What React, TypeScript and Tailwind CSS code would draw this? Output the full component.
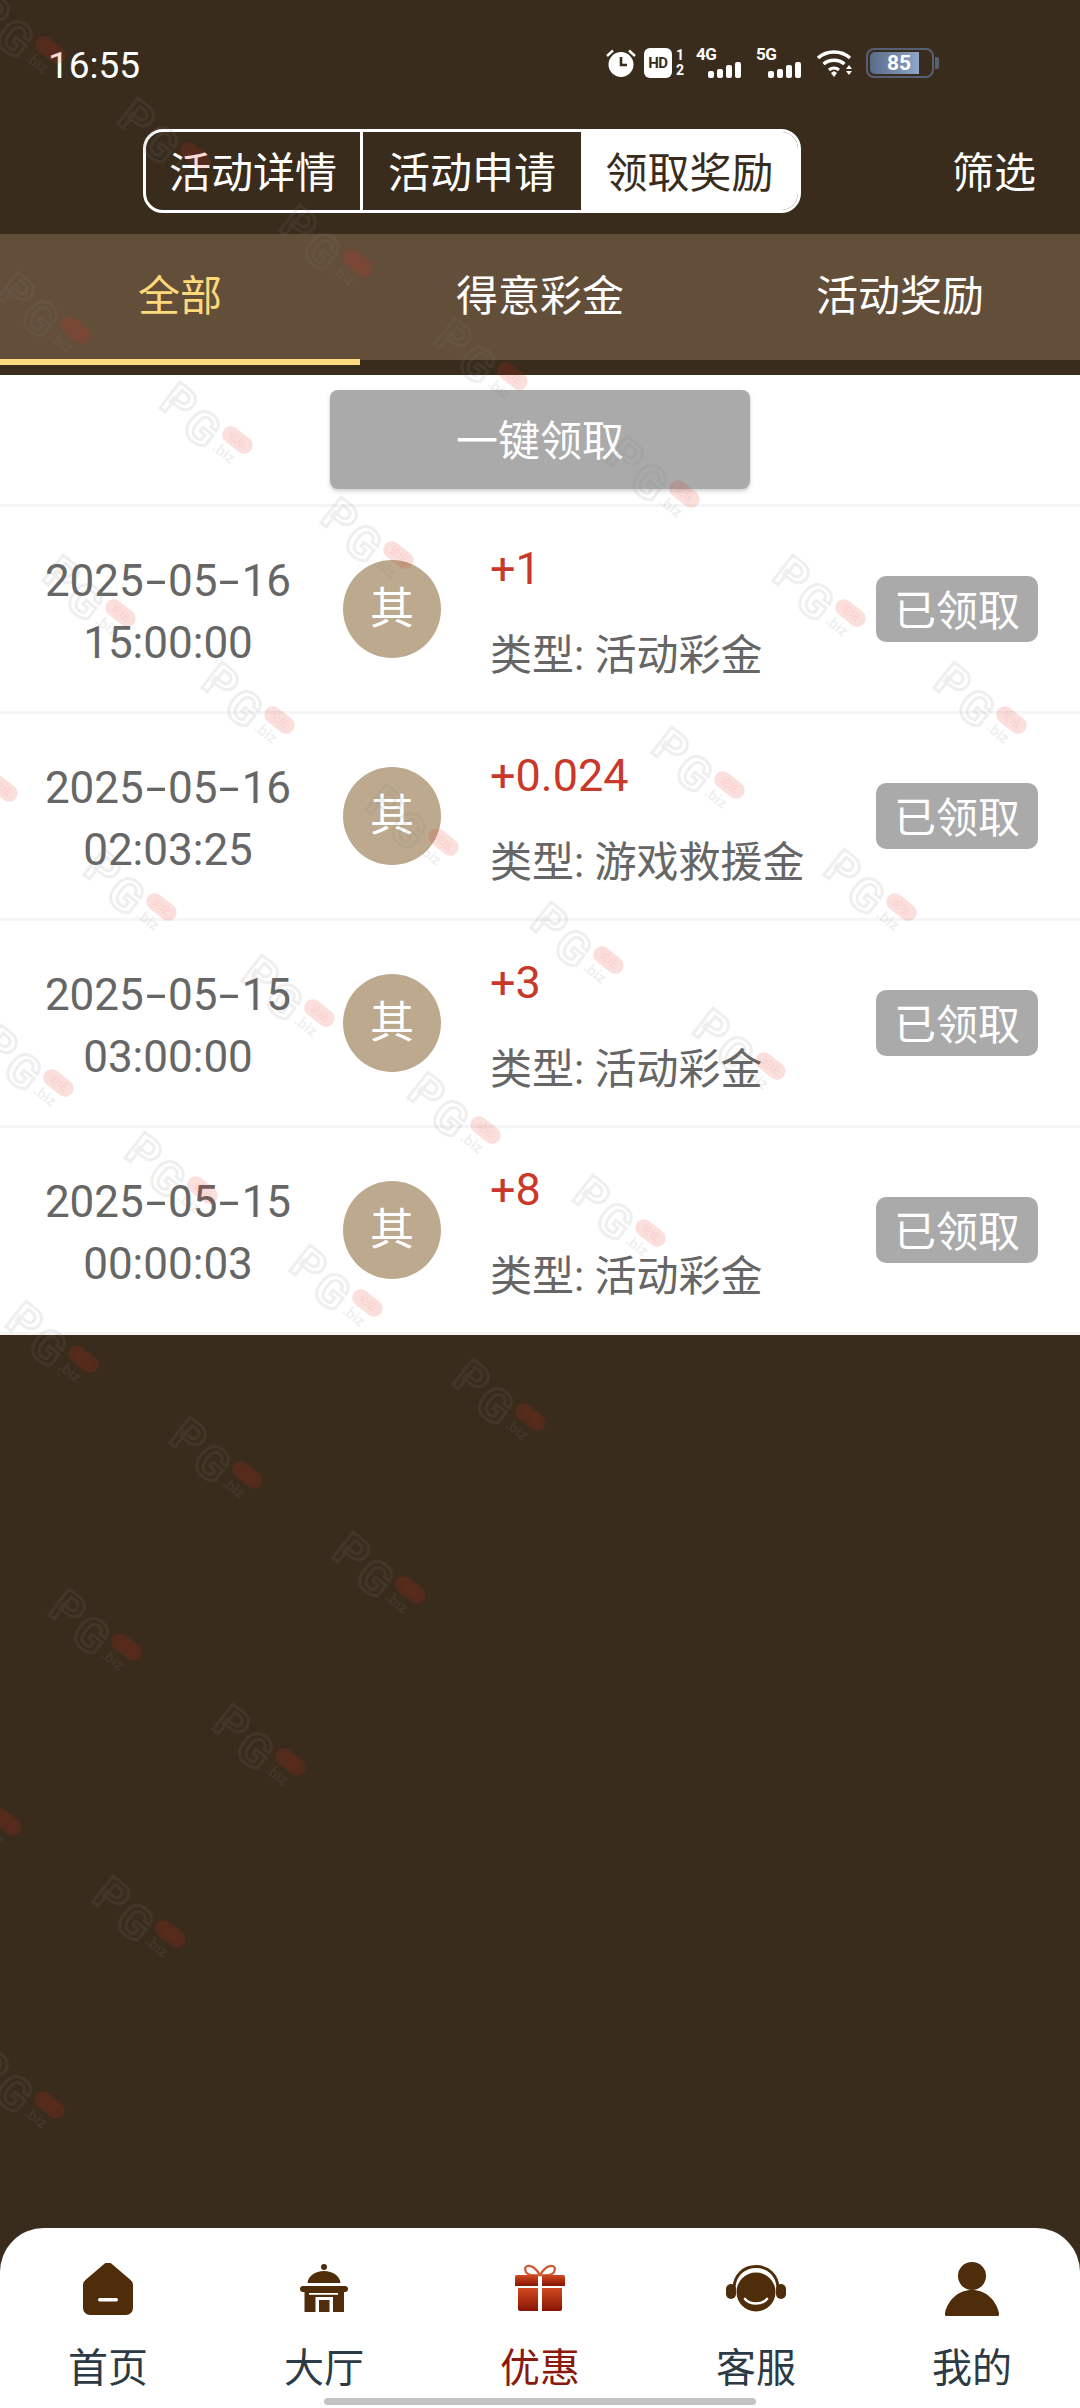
const RECORDS = [
  { date: '2025-05-16', time: '15:00:00', amount: '+1', type: '活动彩金' },
  { date: '2025-05-16', time: '02:03:25', amount: '+0.024', type: '游戏救援金' },
  { date: '2025-05-15', time: '03:00:00', amount: '+3', type: '活动彩金' },
  { date: '2025-05-15', time: '00:00:03', amount: '+8', type: '活动彩金' },
];

// centre points of the repeating site watermark
const MARKS = [
  [20, 37], [165, 143], [327, 250], [45, 317], [482, 363], [207, 427], [654, 481], [368, 542],
  [820, 600], [90, 600], [249, 707], [981, 707], [699, 772], [413, 829], [-28, 775], [131, 894],
  [871, 894], [578, 947], [289, 1000], [28, 1070], [740, 1053], [455, 1117], [172, 1177],
  [620, 1220], [337, 1290], [53, 1346], [500, 1404], [217, 1462], [380, 1577], [96, 1634],
  [260, 1749], [-24, 1809], [140, 1921], [19, 2092],
];

function Watermark({ x, y }: { x: number; y: number }) {
  return (
    <div className="absolute w-0 h-0 rotate-[38deg]" style={{ left: x, top: y }}>
      <span className="absolute left-[-52px] top-[-26px] text-[46px] leading-[48px] font-bold text-transparent [-webkit-text-stroke:3px_rgba(128,128,128,0.14)]">P</span>
      <span className="absolute left-[-19px] top-[-20px] text-[46px] leading-[48px] font-bold text-transparent [-webkit-text-stroke:3px_rgba(128,128,128,0.14)]">G</span>
      <span className="absolute left-[15px] top-[-17px] w-[34px] h-[17px] rounded-full bg-[rgba(225,40,30,0.15)] text-[10px] leading-[17px] text-center text-[rgba(225,40,30,0.12)]">论坛</span>
      <span className="absolute left-[17px] top-[2px] text-[15px] leading-[16px] font-bold text-[rgba(128,128,128,0.14)]">.biz</span>
    </div>
  );
}

function StatusIcons() {
  return (
    <div className="flex items-center text-white">
      {/* alarm */}
      <svg width="32" height="30" viewBox="0 0 32 30">
        <circle cx="16" cy="16.500" r="12.500" fill="#fff" />
        <path d="M16 9v8h6" fill="none" stroke="#3a2c1d" strokeWidth="2.600" />
        <path d="M2 8 8 2.500M30 8l-6-5.500" stroke="#fff" strokeWidth="2.400" />
      </svg>
      <div className="ml-[7px] w-[28px] h-[30px] rounded-[6px] bg-white flex items-center justify-center text-[15px] leading-none font-bold text-[#3a2c1d] tracking-[-0.5px]">HD</div>
      <div className="ml-[4px] flex flex-col items-center text-[14px] leading-[15px] font-bold"><span>1</span><span>2</span></div>
      <NetworkIcon label="4G" className="ml-[12px]" />
      <NetworkIcon label="5G" className="ml-[13px]" />
      {/* wifi */}
      <svg width="38" height="30" viewBox="0 0 38 30" className="ml-[13px]">
        <path d="M2 10c9-8 23-8 32 0" fill="none" stroke="#fff" strokeWidth="3.600" />
        <path d="M7.500 16c6-5 15-5 21 0" fill="none" stroke="#fff" strokeWidth="3.400" />
        <path d="M13 22c3-2.500 7-2.500 10 0" fill="none" stroke="#fff" strokeWidth="3.200" />
        <path d="m15 25 3-2 3 2-3 4z" fill="#fff" />
        <path d="m33 17 3 4h-6zM30 23h6l-3 4z" fill="#fff" />
      </svg>
      {/* battery */}
      <div className="ml-[12px] relative w-[68px] h-[30px] rounded-[8px] border-2 border-[#566074] p-[2px] mr-[5px]">
        <div className="h-full w-[49px] rounded-l-[5px] bg-gradient-to-r from-[#5a6b8a] to-[#90a5c8]" />
        <span className="absolute inset-0 pl-[8px] flex items-center justify-center text-[21px] leading-none font-bold text-white pr-[10px]">85</span>
        <div className="absolute right-[-7px] top-[7px] w-[4px] h-[12px] rounded-r-[2px] bg-[#566074]" />
      </div>
    </div>
  );
}

function NetworkIcon({ label, className }: { label: string; className: string }) {
  return (
    <div className={`relative w-[47px] h-[30px] ${className}`}>
      <span className="absolute left-0 top-[-1px] text-[17px] leading-[15px] font-bold tracking-[-0.5px]">{label}</span>
      <div className="absolute left-[12px] bottom-0 flex items-end gap-[3px]">
        <span className="w-[6px] h-[7px] rounded-[2px] bg-white" />
        <span className="w-[6px] h-[9px] rounded-[2px] bg-white" />
        <span className="w-[6px] h-[13px] rounded-[2px] bg-white" />
        <span className="w-[6px] h-[16px] rounded-[2px] bg-white" />
      </div>
    </div>
  );
}

function HomeIcon() {
  return (
    <svg width="50" height="52" viewBox="0 0 50 52">
      <path d="M20.500 1.500a6 6 0 0 1 9 0L47 16.500a7 7 0 0 1 3 6V45a7 7 0 0 1-7 7H7a7 7 0 0 1-7-7V22.500a7 7 0 0 1 3-6z" fill="#4f2d0b" />
      <rect x="15" y="35" width="20" height="3.500" rx="1.700" fill="#fff" />
    </svg>
  );
}

function HallIcon() {
  return (
    <svg width="48" height="50" viewBox="0 0 48 50">
      <circle cx="24" cy="3" r="3" fill="#4f2d0b" />
      <path d="M7.500 19C8 12 15 7 24 7s16 5 16.500 12z" fill="#4f2d0b" />
      <rect x="0" y="22" width="48" height="6" rx="3" fill="#4f2d0b" />
      <rect x="4.500" y="27" width="39.500" height="21" fill="#4f2d0b" />
      <rect x="9" y="29" width="29" height="1.800" fill="#fff" />
      <path d="M15.500 48V33h17.500v15h-3.500V36H19v12z" fill="#fff" />
    </svg>
  );
}

function GiftIcon() {
  return (
    <svg width="50" height="50" viewBox="0 0 50 50">
      <defs>
        <linearGradient id="gift" x1="0" y1="0" x2="0" y2="1">
          <stop offset="0" stopColor="#d2491f" />
          <stop offset="1" stopColor="#861405" />
        </linearGradient>
      </defs>
      <path d="M25 11C21 4 16 1 12.500 2 9 3 9.500 8 13 10c3 1.500 8 1.500 12 1ZM25 11c4-7 9-10 12.500-9 3.500 1 3 6-.5 8-3 1.500-8 1.500-12 1Z" fill="none" stroke="#cf5a34" strokeWidth="2.200" />
      <path d="M2 11h21v11H0v-9a2 2 0 0 1 2-2ZM27 11h21a2 2 0 0 1 2 2v9H27Z" fill="url(#gift)" />
      <path d="M3 24h20v23H5a2 2 0 0 1-2-2ZM27 24h20v21a2 2 0 0 1-2 2H27Z" fill="url(#gift)" />
    </svg>
  );
}

function ServiceIcon() {
  return (
    <svg width="60" height="48" viewBox="0 0 60 48">
      <path d="M8 24C8 10 18 1.500 30 1.500S52 10 52 24" fill="none" stroke="#4f2d0b" strokeWidth="3" />
      <rect x="0" y="19" width="10" height="15" rx="5" fill="#4f2d0b" />
      <rect x="50" y="19" width="10" height="15" rx="5" fill="#4f2d0b" />
      <circle cx="30" cy="27" r="19.500" fill="#4f2d0b" />
      <path d="M19 34c5 6 17 6 22 0" fill="none" stroke="#fff" strokeWidth="2.600" strokeLinecap="round" />
    </svg>
  );
}

function UserIcon() {
  return (
    <svg width="54" height="54" viewBox="0 0 54 54">
      <circle cx="27" cy="14" r="14" fill="#4f2d0b" />
      <path d="M27 28c14 0 24 10 27 23a2 2 0 0 1-2 3H2a2 2 0 0 1-2-3C3 38 13 28 27 28Z" fill="#4f2d0b" />
    </svg>
  );
}

const NAV_ITEMS = [
  { label: '首页', icon: <HomeIcon /> },
  { label: '大厅', icon: <HallIcon /> },
  { label: '优惠', icon: <GiftIcon />, active: true },
  { label: '客服', icon: <ServiceIcon /> },
  { label: '我的', icon: <UserIcon /> },
];

function DateText({ value }: { value: string }) {
  const [year, month, day] = value.split('-');
  return (
    <div>
      {year}<span className="inline-block mx-[6px] scale-x-[1.7]">-</span>{month}<span className="inline-block mx-[6px] scale-x-[1.7]">-</span>{day}
    </div>
  );
}

export default function App() {
  return (
    <div className="relative w-[1080px] h-[2408px] overflow-hidden flex flex-col bg-[#3a2c1d] [font-family:Roboto,'Noto_Sans_CJK_SC',sans-serif]">
      {/* Status bar */}
      <div className="h-[129px] shrink-0 flex items-start justify-between pl-[48px] pr-[141px] pt-[48px] text-white">
        <span className="text-[37px] leading-[36px]">16:55</span>
        <StatusIcons />
      </div>

      {/* Header */}
      <div className="h-[105px] shrink-0 relative pl-[143px]">
        <div className="flex h-[84px] w-[658px] rounded-[20px] border-[3px] border-white overflow-hidden text-[42px] leading-[84px] text-center">
          <div className="w-[217px] text-white border-r-[3px] border-white">活动详情</div>
          <div className="w-[218px] text-white">活动申请</div>
          <div className="flex-1 bg-white text-[#3a2c1d]">领取奖励</div>
        </div>
        <span className="absolute right-[44px] top-0 h-[84px] leading-[90px] text-[42px] text-white">筛选</span>
      </div>

      {/* Tabs */}
      <div className="h-[126px] shrink-0 grid grid-cols-3 bg-[#634e3a] text-[42px] text-center text-white">
        <div className="h-full leading-[125px] text-[#fdd97c] border-b-[6px] border-[#fddc80]">全部</div>
        <div className="h-full leading-[125px]">得意彩金</div>
        <div className="h-full leading-[125px]">活动奖励</div>
      </div>

      {/* Records */}
      <div className="mt-[15px] shrink-0 bg-white">
        <div className="h-[132px] flex justify-center pt-[15px] border-b-[3px] border-[#f5f5f5]">
          <button className="w-[420px] h-[99px] pt-[3px] rounded-[8px] bg-[#aaaaaa] text-white text-[42px] shadow-[0_2px_4px_rgba(0,0,0,0.2)]">一键领取</button>
        </div>
        {RECORDS.map((record) => (
          <div key={record.time} className="h-[207px] flex items-center border-b-[3px] border-[#f5f5f5]">
            <div className="w-[336px] pt-[6px] text-center text-[44px] leading-[62px] text-[#666666]">
              <DateText value={record.date} />
              <div>{record.time}</div>
            </div>
            <div className="ml-[7px] w-[98px] h-[98px] rounded-full bg-[#bdaa8e] flex items-center justify-center text-[44px] text-white">其</div>
            <div className="ml-[49px] pt-[6px] flex-1 flex flex-col gap-[25px] text-[42px] leading-[62px]">
              <div className="text-[45px] text-[#c8392a]">{record.amount}</div>
              <div className="text-[#666666]">类型: {record.type}</div>
            </div>
            <div className="mr-[42px] w-[162px] h-[66px] rounded-[10px] bg-[#aaaaaa] text-center text-white text-[42px] leading-[72px]">已领取</div>
          </div>
        ))}
      </div>

      {/* Watermark layer */}
      <div className="absolute inset-0 pointer-events-none">
        {MARKS.map(([x, y]) => (
          <Watermark key={`${x}-${y}`} x={x} y={y} />
        ))}
      </div>

      {/* Bottom nav */}
      <div className="mt-auto relative h-[180px] shrink-0 rounded-t-[44px] bg-white grid grid-cols-5">
        {NAV_ITEMS.map((item) => (
          <div key={item.label} className="flex flex-col items-center">
            <div className="h-[56px] mt-[33px] flex items-center justify-center">{item.icon}</div>
            <span className={`mt-[28px] text-[40px] leading-[48px] ${item.active ? 'text-[#8a1a0e]' : 'text-[#2c3a45]'}`}>{item.label}</span>
          </div>
        ))}
        <div className="absolute left-[324px] bottom-[3px] w-[432px] h-[7px] rounded-full bg-[#c4c4c4]" />
      </div>
    </div>
  );
}
